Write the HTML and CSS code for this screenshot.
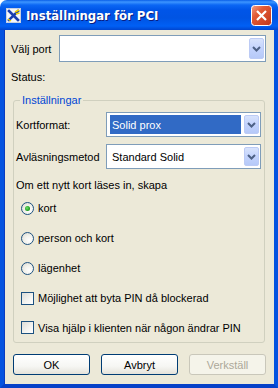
FILE: index.html
```html
<!DOCTYPE html>
<html lang="sv">
<head>
<meta charset="utf-8">
<title>Inställningar för PCI</title>
<link rel="stylesheet" href="styles.css">
</head>
<body>
<div class="window">
  <div class="titlebar">
    <svg class="appicon" width="15" height="15" viewBox="0 0 15 15">
      <rect x="0.5" y="0.5" width="14" height="14" fill="#f4f6fb" stroke="#c8d0e0"/>
      <path d="M3 3 L12 12 M12 3 L3 12" stroke="#1a3fb0" stroke-width="2.6" stroke-linecap="square"/>
      <path d="M9 4 L13 2 M10 6 L13.5 5" stroke="#f0d000" stroke-width="1.4"/>
      <path d="M2 11 L5 13" stroke="#f0d000" stroke-width="1.4"/>
    </svg>
    <span class="title">Inställningar för PCI</span>
    <svg class="close" width="21" height="21" viewBox="0 0 21 21">
      <defs>
        <linearGradient id="cg" x1="0" y1="0" x2="1" y2="1">
          <stop offset="0" stop-color="#f2a088"/>
          <stop offset="0.35" stop-color="#e25a35"/>
          <stop offset="1" stop-color="#c1361a"/>
        </linearGradient>
      </defs>
      <rect x="0.5" y="0.5" width="20" height="20" rx="3" fill="url(#cg)" stroke="#ffffff"/>
      <path d="M6 6 L15 15 M15 6 L6 15" stroke="#ffffff" stroke-width="2.2"/>
    </svg>
  </div>
  <div class="frame">
    <div class="row port-row">
      <span class="lbl port-lbl">Välj port</span>
      <div class="combo combo-port">
        <span class="combo-text"></span>
        <span class="combo-btn"><svg width="9" height="6" viewBox="0 0 9 6"><path d="M1 1 L4.5 4.5 L8 1" fill="none" stroke="#4d6185" stroke-width="2"/></svg></span>
      </div>
    </div>
    <div class="status">Status:</div>
    <fieldset class="group">
      <legend>Inställningar</legend>
      <div class="row frow">
        <span class="lbl flbl">Kortformat:</span>
        <div class="combo combo-f">
          <span class="combo-text selected">Solid prox</span>
          <span class="combo-btn"><svg width="9" height="6" viewBox="0 0 9 6"><path d="M1 1 L4.5 4.5 L8 1" fill="none" stroke="#4d6185" stroke-width="2"/></svg></span>
        </div>
      </div>
      <div class="row frow frow2">
        <span class="lbl flbl">Avläsningsmetod</span>
        <div class="combo combo-f">
          <span class="combo-text">Standard Solid</span>
          <span class="combo-btn"><svg width="9" height="6" viewBox="0 0 9 6"><path d="M1 1 L4.5 4.5 L8 1" fill="none" stroke="#4d6185" stroke-width="2"/></svg></span>
        </div>
      </div>
      <div class="hint">Om ett nytt kort läses in, skapa</div>
      <div class="opt"><span class="radio checked"></span><span>kort</span></div>
      <div class="opt"><span class="radio"></span><span>person och kort</span></div>
      <div class="opt"><span class="radio"></span><span>lägenhet</span></div>
      <div class="opt"><span class="check"></span><span>Möjlighet att byta PIN då blockerad</span></div>
      <div class="opt last"><span class="check"></span><span>Visa hjälp i klienten när någon ändrar PIN</span></div>
    </fieldset>
    <div class="buttons">
      <span class="btn">OK</span>
      <span class="btn">Avbryt</span>
      <span class="btn disabled">Verkställ</span>
    </div>
  </div>
</div>
</body>
</html>
```
FILE: styles.css
```css
html, body {
  margin: 0;
  padding: 0;
  background: #ffffff;
}
.window {
  width: 278px;
  height: 388px;
  display: flex;
  flex-direction: column;
  font-family: "Liberation Sans", Arial, sans-serif;
  font-size: 11px;
  color: #000000;
}
.titlebar {
  height: 30px;
  flex: none;
  display: flex;
  align-items: center;
  padding: 0 6px 0 6px;
  border-radius: 7px 7px 0 0;
  background: linear-gradient(to bottom, #0a5fe8 0px, #3d95ff 2px, #0b67f4 5px, #0055e8 10px, #0054e3 18px, #0060f5 26px, #0045cf 30px);
}
.appicon {
  flex: none;
  margin-top: 1px;
}
.title {
  margin-left: 5px;
  color: #ffffff;
  font-weight: bold;
  font-size: 13px;
  font-family: "DejaVu Sans Condensed", "DejaVu Sans", sans-serif;
  text-shadow: 1px 1px 0 #0a1e80;
  flex: 1;
  margin-top: 1px;
}
.close {
  flex: none;
  margin-top: 1px;
}
.frame {
  flex: 1;
  background: #ece9d8;
  border-left: 4px solid #0553e0;
  border-right: 4px solid #0553e0;
  border-bottom: 4px solid #0641c8;
  box-shadow: inset 1px 0 0 #0a3cc0;
  padding: 5px 8px 0 7px;
  display: flex;
  flex-direction: column;
}
.row {
  display: flex;
  align-items: center;
}
.lbl {
  flex: none;
}
.port-lbl {
  width: 48px;
}
.combo {
  flex: 1;
  display: flex;
  align-items: stretch;
  background: #ffffff;
  border: 1px solid #7f9db9;
  box-sizing: border-box;
}
.combo-port {
  height: 27px;
  padding: 2px 1px 2px 3px;
}
.combo-f {
  height: 25px;
  padding: 2px 1px 2px 3px;
}
.combo-text {
  flex: 1;
  display: flex;
  align-items: center;
  padding-left: 2px;
  margin-right: 3px;
}
.combo-text.selected {
  background: #316ac5;
  color: #ffffff;
}
.combo-btn {
  flex: none;
  width: 15px;
  display: flex;
  align-items: center;
  justify-content: center;
  border: 1px solid #bccbf5;
  border-radius: 2px;
  background: linear-gradient(to bottom, #d8e3fc 0%, #c3d3fd 50%, #b6c9f8 100%);
  box-sizing: border-box;
}
.status {
  margin-top: 7px;
  height: 16px;
  line-height: 16px;
}
.group {
  margin: 9px 1px 0 2px;
  padding: 0 3px 0 2px;
  border: 1px solid #d0d0bf;
  border-radius: 3px;
  min-width: 0;
}
.group legend {
  color: #0046d5;
  padding: 0 2px;
  margin-left: 4px;
  line-height: 13px;
}
.frow {
  margin-top: 5px;
}
.frow2 {
  margin-top: 7px;
}
.flbl {
  width: 90px;
}
.hint {
  margin-top: 8px;
  height: 16px;
  line-height: 16px;
}
.opt {
  height: 30px;
  display: flex;
  align-items: center;
  padding-left: 5px;
}
.opt.last {
  height: 29px;
}
.radio {
  width: 13px;
  height: 13px;
  box-sizing: border-box;
  border: 1px solid #1c5180;
  border-radius: 50%;
  background: radial-gradient(circle at 65% 65%, #ffffff 0%, #f0f0ea 50%, #d6d3c8 100%);
  margin-right: 4px;
  display: flex;
  align-items: center;
  justify-content: center;
}
.radio.checked::after {
  content: "";
  width: 5px;
  height: 5px;
  border-radius: 50%;
  background: radial-gradient(circle at 40% 40%, #6fe06f 0%, #21a121 60%, #1a8a1a 100%);
}
.check {
  width: 13px;
  height: 13px;
  box-sizing: border-box;
  border: 1px solid #1c5180;
  background: linear-gradient(135deg, #dcdcd7 0%, #f4f4f1 60%, #ffffff 100%);
  margin-right: 4px;
}
.buttons {
  margin-top: 11px;
  display: flex;
  gap: 11px;
  padding-left: 2px;
}
.btn {
  width: 77px;
  height: 21px;
  box-sizing: border-box;
  border: 1px solid #003c74;
  border-radius: 3px;
  background: linear-gradient(to bottom, #ffffff 0%, #f6f6f3 60%, #e4e2da 100%);
  display: flex;
  align-items: center;
  justify-content: center;
}
.btn.disabled {
  border-color: #c9c7ba;
  background: #f5f4ea;
  color: #aca899;
}
```
